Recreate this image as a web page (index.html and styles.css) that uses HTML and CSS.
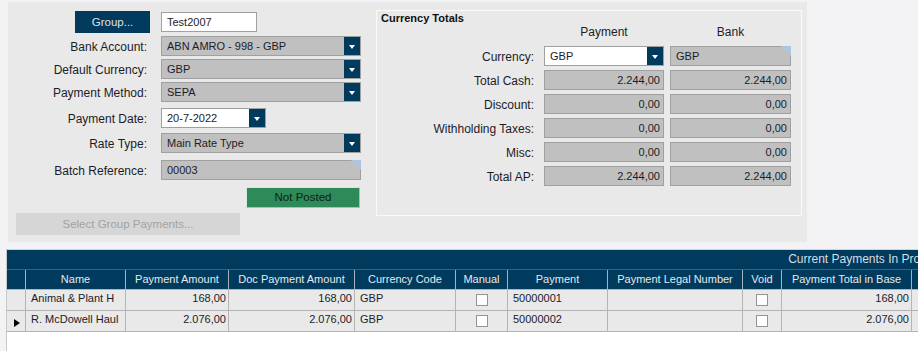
FILE: index.html
```html
<!DOCTYPE html>
<html>
<head>
<meta charset="utf-8">
<link rel="stylesheet" href="styles.css">
</head>
<body>
<div class="panel">
  <div class="form">
    <div class="btn-cell"><div class="btn-dark">Group...</div></div>
    <div class="field white w96 input1">Test2007</div>

    <div class="lbl">Bank Account:</div>
    <div class="field combo"><span class="val">ABN AMRO - 998 - GBP</span><span class="dd"></span></div>

    <div class="lbl">Default Currency:</div>
    <div class="field combo"><span class="val">GBP</span><span class="dd"></span></div>

    <div class="lbl">Payment Method:</div>
    <div class="field combo"><span class="val">SEPA</span><span class="dd"></span></div>

    <div class="lbl">Payment Date:</div>
    <div class="field combo white w105"><span class="val">20-7-2022</span><span class="dd"></span></div>

    <div class="lbl">Rate Type:</div>
    <div class="field combo"><span class="val">Main Rate Type</span><span class="dd"></span></div>

    <div class="lbl">Batch Reference:</div>
    <div class="field flag"><span class="val">00003</span></div>

    <div class="status">Not Posted</div>

    <div class="btn-disabled">Select Group Payments...</div>
  </div>

  <div class="group">
    <div class="gtitle">Currency Totals</div>
    <div class="ggrid">
      <div></div>
      <div class="colhead w120">Payment</div>
      <div class="colhead w121">Bank</div>

      <div class="lbl">Currency:</div>
      <div class="field combo white w120"><span class="val">GBP</span><span class="dd"></span></div>
      <div class="field flag w121"><span class="val">GBP</span></div>

      <div class="lbl">Total Cash:</div>
      <div class="field num w120">2.244,00</div>
      <div class="field num w121">2.244,00</div>

      <div class="lbl">Discount:</div>
      <div class="field num w120">0,00</div>
      <div class="field num w121">0,00</div>

      <div class="lbl">Withholding Taxes:</div>
      <div class="field num w120">0,00</div>
      <div class="field num w121">0,00</div>

      <div class="lbl">Misc:</div>
      <div class="field num w120">0,00</div>
      <div class="field num w121">0,00</div>

      <div class="lbl">Total AP:</div>
      <div class="field num w120">2.244,00</div>
      <div class="field num w121">2.244,00</div>
    </div>
  </div>
</div>

<div class="grid">
  <div class="gridtitle">Current Payments In Process</div>
  <div class="row head">
    <div class="c sel"></div>
    <div class="c">Name</div>
    <div class="c">Payment Amount</div>
    <div class="c">Doc Payment Amount</div>
    <div class="c">Currency Code</div>
    <div class="c">Manual</div>
    <div class="c">Payment</div>
    <div class="c">Payment Legal Number</div>
    <div class="c">Void</div>
    <div class="c">Payment Total in Base</div>
    <div class="c"></div>
  </div>
  <div class="row data">
    <div class="c sel"></div>
    <div class="c">Animal &amp; Plant H</div>
    <div class="c r">168,00</div>
    <div class="c r">168,00</div>
    <div class="c">GBP</div>
    <div class="c chk"><span class="box"></span></div>
    <div class="c">50000001</div>
    <div class="c"></div>
    <div class="c chk"><span class="box"></span></div>
    <div class="c r">168,00</div>
    <div class="c"></div>
  </div>
  <div class="row data">
    <div class="c sel"><span class="arrow"></span></div>
    <div class="c">R. McDowell Haul</div>
    <div class="c r">2.076,00</div>
    <div class="c r">2.076,00</div>
    <div class="c">GBP</div>
    <div class="c chk"><span class="box"></span></div>
    <div class="c">50000002</div>
    <div class="c"></div>
    <div class="c chk"><span class="box"></span></div>
    <div class="c r">2.076,00</div>
    <div class="c"></div>
  </div>
</div>
</body>
</html>
```
FILE: styles.css
```css
* { box-sizing: border-box; }
html, body { margin: 0; padding: 0; overflow: hidden; }
body {
  width: 918px;
  height: 351px;
  background: #f3f3f5;
  font-family: "Liberation Sans", Arial, sans-serif;
  color: #1c1c28;
}

.panel {
  margin: 2px 0 0 8px;
  width: 799px;
  height: 240px;
  background: #e9e9e9;
  display: flex;
}

.form {
  width: 368px;
  padding-top: 9px;
  display: grid;
  grid-template-columns: 139px 200px;
  column-gap: 14px;
  grid-template-rows: 25px 23px 23px 26px 25px 27px 27px 26px 22px;
  align-items: start;
}

.lbl {
  font-size: 12px;
  text-align: right;
  line-height: 20px;
  height: 20px;
  padding-top: 1px;
  white-space: nowrap;
}

.btn-cell { display: flex; justify-content: flex-end; }
.btn-dark {
  margin-right: -3px;
  width: 75px;
  height: 22px;
  background: #003a5c;
  color: #dfe3e8;
  font-size: 11.5px;
  line-height: 22px;
  text-align: center;
}

.field {
  height: 20px;
  border: 1px solid #a0a0a0;
  background: #c0c0c0;
  font-size: 11px;
  line-height: 18px;
  color: #1c1c28;
  position: relative;
  white-space: nowrap;
}
.field .val { padding-left: 5px; flex: 1; }
.white { background: #fff; }
.w96 { width: 96px; padding-left: 5px; }
.input1 { margin-top: 1px; }
.w105 { width: 105px; }
.w120 { width: 120px; }
.w121 { width: 121px; }

.combo { display: flex; }
.dd {
  width: 16px;
  height: 18px;
  background: #003a5c;
  display: flex;
  align-items: center;
  justify-content: center;
}
.dd::after {
  content: "";
  width: 0;
  height: 0;
  border-left: 3px solid transparent;
  border-right: 3px solid transparent;
  border-top: 4px solid #fff;
  margin-top: 1px;
}

.flag::after {
  content: "";
  position: absolute;
  top: -1px;
  right: -1px;
  width: 0;
  height: 0;
  border-top: 10px solid #afc4de;
  border-left: 10px solid transparent;
}

.num { text-align: right; padding-right: 3px; }

.status {
  grid-column: 2;
  justify-self: end;
  margin-right: 1px;
  width: 114px;
  height: 21px;
  background: #2e8a58;
  border-top: 1px solid #d8e8dc;
  border-left: 1px solid #d8e8dc;
  border-right: 1px solid #b8b8b8;
  border-bottom: 1px solid #b8b8b8;
  font-size: 11.5px;
  line-height: 18px;
  text-align: center;
  color: #10201a;
}

.btn-disabled {
  grid-column: 1 / -1;
  margin-left: 8px;
  width: 224px;
  height: 22px;
  background: #d6d6d6;
  color: #a2a2a2;
  font-size: 11.5px;
  line-height: 22px;
  text-align: center;
}

.group {
  margin-top: 8px;
  width: 426px;
  height: 206px;
  border: 1px solid #fafafa;
}
.gtitle {
  margin: 1px 0 0 4px;
  height: 12px;
  font-size: 11px;
  font-weight: bold;
  line-height: 12px;
  color: #111;
}
.ggrid {
  display: grid;
  grid-template-columns: 167px 126px 121px;
  grid-template-rows: 18px repeat(6, 20px);
  row-gap: 4px;
}
.ggrid .lbl { padding-right: 10px; }
.colhead {
  font-size: 12px;
  line-height: 16px;
  text-align: center;
  color: #1c1c28;
}

.grid {
  margin: 7px 0 0 6px;
  width: 1720px;
  height: 110px;
  background: #fff;
  border-left: 1px solid #c8c8c8;
  border-top: 1px solid #d4d4d4;
}
.gridtitle {
  height: 20px;
  background: #003a5c;
  border-bottom: 1px solid #40617a;
  color: #d6dde4;
  font-size: 12px;
  line-height: 19px;
  text-align: center;
}
.row {
  display: grid;
  grid-template-columns: 19px 100px 103px 126px 101px 52px 100px 135px 39px 130px 100px;
  font-size: 11px;
}
.row .c {
  border-right: 1px solid #b4b4b4;
  white-space: nowrap;
  overflow: hidden;
}
.head { height: 20px; background: #003a5c; border-bottom: 1px solid #b4b4b4; }
.head .c {
  border-right-color: #a6b2bd;
  color: #e6e9ec;
  text-align: center;
  line-height: 19px;
}
.data { height: 21px; background: #e9e9e9; border-bottom: 1px solid #b4b4b4; }
.data .c { padding: 1px 5px 0 5px; line-height: 14px; }
.data .c.r { text-align: right; padding-right: 2px; }
.data .c.sel { padding: 0; display: flex; align-items: center; justify-content: center; }
.arrow {
  width: 0;
  height: 0;
  border-left: 6px solid #000;
  border-top: 4.5px solid transparent;
  border-bottom: 4.5px solid transparent;
  margin: 3px 0 0 2px;
}
.data .c.chk { display: flex; justify-content: center; padding: 4px 0 0 0; }
.box {
  width: 12px;
  height: 12px;
  background: #fff;
  border: 1px solid #949494;
}
```
